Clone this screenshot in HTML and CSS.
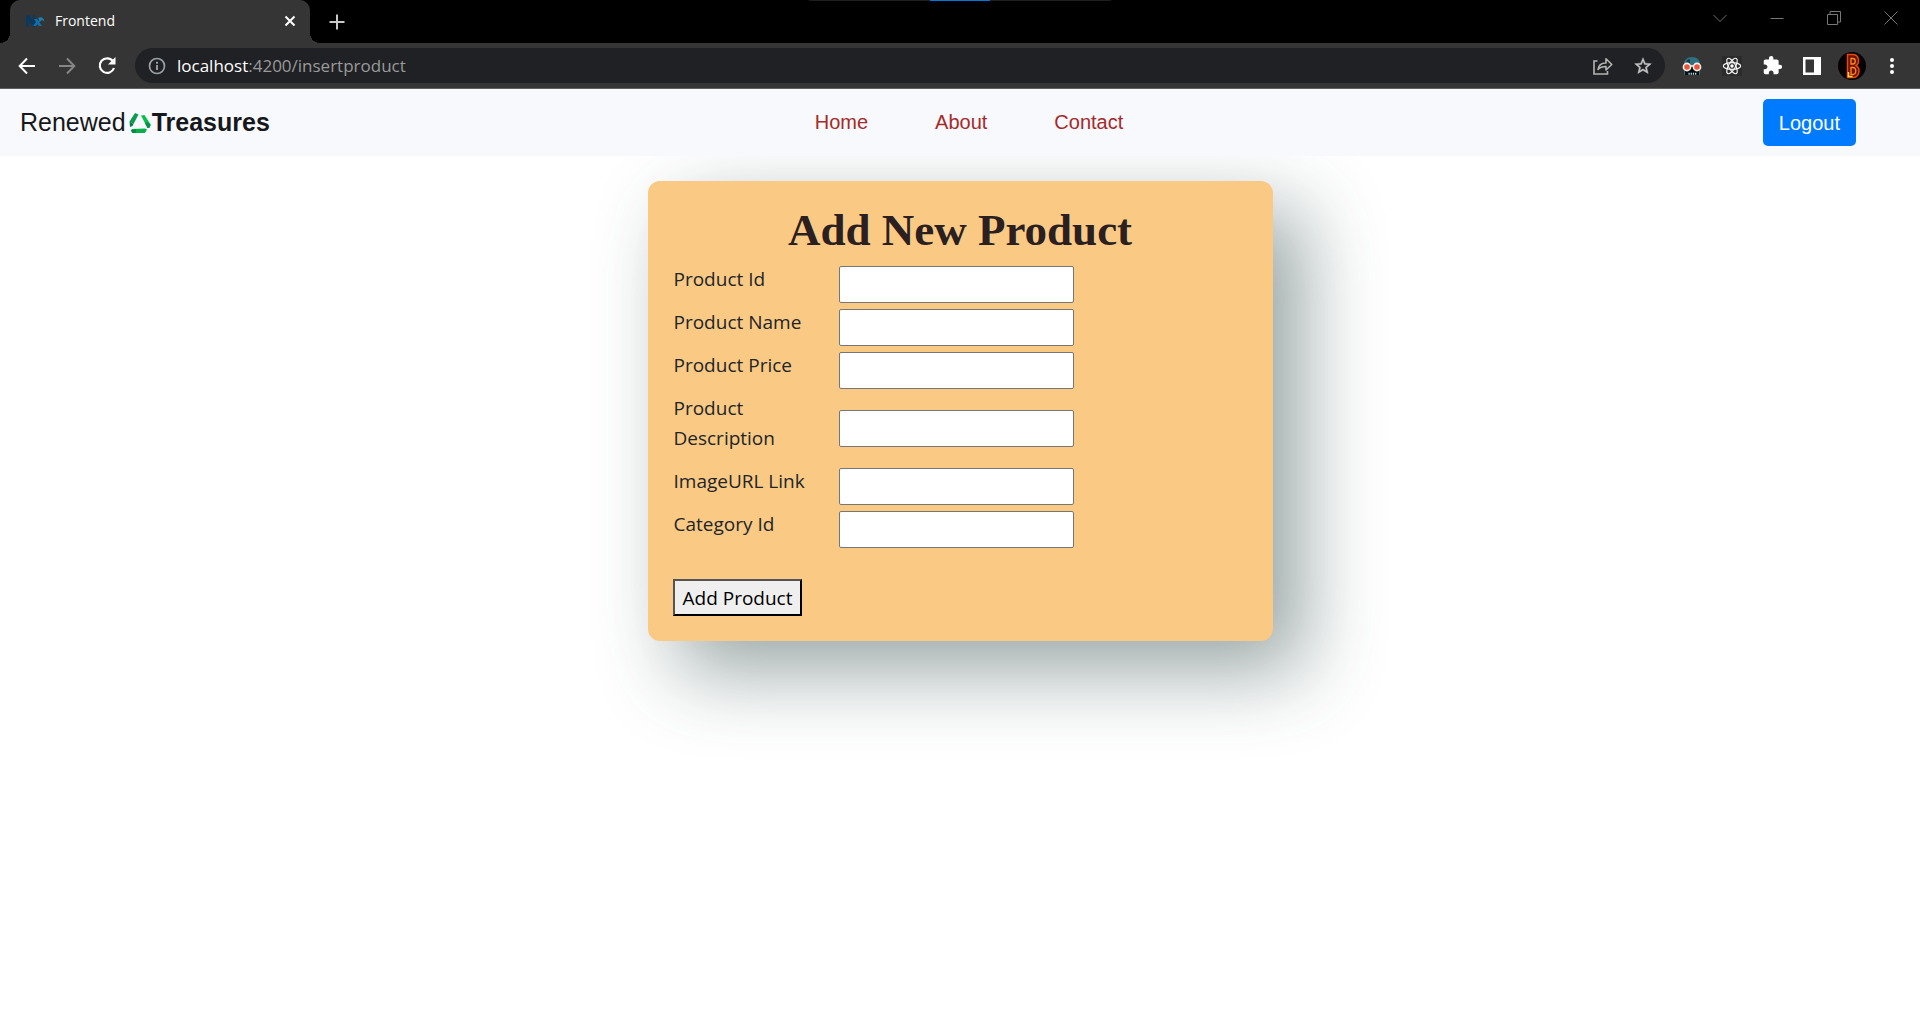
FILE: index.html
```
<!DOCTYPE html>
<html lang="en">
<head>
<meta charset="utf-8">
<title>Frontend</title>
<link rel="stylesheet" href="styles.css">
</head>
<body>
<header class="browser">
  <div class="capture-bar"><span class="capture-grip"></span></div>
  <div class="tab-strip">
    <div class="tab">
      <svg class="favicon" width="20" height="16" viewBox="0 0 20 16" fill="none">
        <path d="M1 14V2h3l4 6V2h2v12H8L3.500 7v7z" fill="#073a63"/>
        <path d="M8 13l3-4-2-3h3l1.500 2L15 6h2l-2.500 3.500L17 13h-3l-1.500-2-1.500 2z" fill="#0d70a8"/>
        <path d="M13 5c3-2 6 0 6.500 4-1-2-3-2-4.500-1z" fill="#1a80b8"/>
      </svg>
      <span class="tab-title">Frontend</span>
      <button class="tab-close" aria-label="Close tab">
        <svg width="12" height="12" viewBox="0 0 12 12" stroke="#fff" stroke-width="2"><path d="M1.500 1.500l9 9M10.500 1.500l-9 9"/></svg>
      </button>
    </div>
    <button class="new-tab" aria-label="New tab">
      <svg width="16" height="16" viewBox="0 0 16 16" stroke="#c8c8c8" stroke-width="2"><path d="M8 .500v15M.500 8h15"/></svg>
    </button>
    <div class="window-controls">
      <button aria-label="Search tabs"><svg width="14" height="14" viewBox="0 0 14 14" fill="none" stroke="#6b6b6b"><path d="M.500 4l6.500 6.500L13.500 4"/></svg></button>
      <button aria-label="Minimize"><svg width="14" height="14" viewBox="0 0 14 14" fill="none" stroke="#777"><path d="M.500 7.500h13"/></svg></button>
      <button aria-label="Restore"><svg width="14" height="14" viewBox="0 0 14 14" fill="none" stroke="#777"><path d="M.500 3.500h10v10H.500zM3 3.500V.500h10.500v10.500H10.500"/></svg></button>
      <button aria-label="Close"><svg width="14" height="14" viewBox="0 0 14 14" fill="none" stroke="#777"><path d="M.500 .500l13 13M13.500 .500l-13 13"/></svg></button>
    </div>
  </div>
  <div class="toolbar">
    <button class="tool" aria-label="Back"><svg width="18" height="18" viewBox="0 0 18 18" fill="none" stroke="#fff" stroke-width="2"><path d="M17 9H2M9 1.500L1.700 9 9 16.500"/></svg></button>
    <button class="tool" aria-label="Forward"><svg width="18" height="18" viewBox="0 0 18 18" fill="none" stroke="#868686" stroke-width="2"><path d="M1 9h15M9 1.500L16.300 9 9 16.500"/></svg></button>
    <button class="tool" aria-label="Reload"><svg width="18" height="18" viewBox="0 0 18 18" fill="none"><path d="M14.800 4A7.300 7.300 0 1 0 16 11" stroke="#fff" stroke-width="2.200"/><path d="M17.500 0v7.500H10z" fill="#fff"/></svg></button>
    <div class="address">
      <svg width="18" height="18" viewBox="0 0 18 18" fill="none" stroke="#9aa0a6"><circle cx="9" cy="9" r="7.500" stroke-width="1.700"/><path d="M9 8v5M9 4.800v2" stroke-width="1.900"/></svg>
      <span class="url"><span class="host">localhost</span>:4200/insertproduct</span>
      <button class="tool" aria-label="Share"><svg width="20" height="18" viewBox="0 0 20 18" fill="none" stroke="#b4b4b4" stroke-width="1.600"><path d="M4.500 4H1v13h13.500v-3"/><path d="M5 12.500c.500-4 3-6.500 8-6.500V1.800l5.800 5.700L13 13V9.500c-3.500 0-6 .700-8 3z" stroke-linejoin="round"/></svg></button>
      <button class="tool" aria-label="Bookmark"><svg width="20" height="20" viewBox="0 0 24 24" fill="#c4c4c4"><path d="M22 9.240l-7.190-.620L12 2 9.190 8.630 2 9.240l5.460 4.730L5.820 21 12 17.270 18.180 21l-1.630-7.030zM12 15.400l-3.760 2.270 1-4.280-3.320-2.880 4.380-.380L12 6.100l1.710 4.040 4.380.380-3.320 2.880 1 4.280z" stroke="#c4c4c4" stroke-width=".500"/></svg></button>
    </div>
    <button class="tool" aria-label="Goggles extension"><svg width="20" height="20" viewBox="0 0 20 20"><path d="M2 10C1.500 4 5 1 10 1s8.500 3 8 9v9H2z" fill="#2f6f80"/><path d="M4.500 9V5.500C5.500 3 7.500 2.500 8 4v5z" fill="#173742"/><path d="M3 14l14-.500V19H3z" fill="#080d10"/><path d="M8 10h4l1 6H7z" fill="#080d10"/><circle cx="5" cy="11" r="3.600" fill="#e9573a" stroke="#f4eee8" stroke-width="1.600"/><circle cx="15" cy="11" r="3.600" fill="#e9573a" stroke="#f4eee8" stroke-width="1.600"/><path d="M8.500 10h3" stroke="#f4eee8" stroke-width="1.600"/><path d="M6.500 17.700h8" stroke="#bde3ec" stroke-width="2" stroke-dasharray="1.200 1"/></svg></button>
    <button class="tool" aria-label="React extension"><svg class="react" width="20" height="20" viewBox="0 0 20 20" fill="none" stroke="#f2f2f2" stroke-width="1.200"><ellipse cx="10" cy="10" rx="8.700" ry="3.400"/><ellipse cx="10" cy="10" rx="8.700" ry="3.400" transform="rotate(60 10 10)"/><ellipse cx="10" cy="10" rx="8.700" ry="3.400" transform="rotate(120 10 10)"/><circle cx="10" cy="10" r="1.700" fill="#fff" stroke="none"/></svg></button>
    <button class="tool" aria-label="Extensions"><svg width="21" height="21" viewBox="0 0 24 24" fill="#fff"><path d="M20.500 11H19V7c0-1.100-.900-2-2-2h-4V3.500a2.500 2.500 0 0 0-5 0V5H4c-1.100 0-1.990.900-1.990 2v3.800H3.500c1.490 0 2.700 1.210 2.700 2.700s-1.210 2.700-2.700 2.700H2V20c0 1.100.900 2 2 2h3.800v-1.500c0-1.490 1.210-2.700 2.700-2.700s2.700 1.210 2.700 2.700V22H17c1.100 0 2-.900 2-2v-4h1.500a2.500 2.500 0 0 0 0-5z"/></svg></button>
    <button class="tool" aria-label="Side panel"><svg width="18" height="18" viewBox="0 0 18 18"><path d="M0 0h18v18H0zM2.500 2.500v13H11v-13z" fill="#fff" fill-rule="evenodd"/></svg></button>
    <button class="tool" aria-label="Profile"><svg width="28" height="28" viewBox="0 0 28 28" fill="none"><circle cx="14" cy="14" r="14" fill="#070202"/><path d="M9.500 2.500h5c7 0 7.500 8.500 3.500 11 5 3 3.500 12-3 12H9.500z" fill="#6d1204" stroke="#e8480f" stroke-width="1.500"/><path d="M13 6.500h2c3 0 3 5.500 0 5.500h-2zM13 15.500h2c4 0 3.500 7 0 7h-2z" stroke="#ff8a1f" stroke-width="1.300"/><path d="M10.500 20v4.500h4" stroke="#ffd04a" stroke-width="1.500"/></svg></button>
    <button class="tool" aria-label="Menu"><svg width="4" height="18" viewBox="0 0 4 18" fill="#fff"><circle cx="2" cy="3" r="2"/><circle cx="2" cy="9" r="2"/><circle cx="2" cy="15" r="2"/></svg></button>
  </div>
</header>

<nav class="navbar">
  <a class="brand" href="#">Renewed<svg width="24" height="22" viewBox="0 0 24 22"><path d="M7 1l3.500 1.500L5.500 12 1.500 9.500z" fill="#0a9a50"/><path d="M1.500 9.500l4 2.500-1 2L2 15z" fill="#067f45"/><path d="M13 3.500l3.500-.500L23 13l-3.500 3z" fill="#0abf4e"/><path d="M19.500 10L22.500 13l-1 3h-2L17 11z" fill="#079248"/><path d="M4 17l13-.500 2 1-2 3.500H4.500l-1.500-2z" fill="#08b04b"/><path d="M3 18l5-1v4H4.500z" fill="#078c46"/></svg><strong>Treasures</strong></a>
  <ul class="links">
    <li><a href="#">Home</a></li>
    <li><a href="#">About</a></li>
    <li><a href="#">Contact</a></li>
  </ul>
  <button class="logout">Logout</button>
</nav>

<main class="page">
  <form class="card">
    <h1>Add New Product</h1>
    <div class="fields">
      <label for="product-id">Product Id</label><input id="product-id" type="text">
      <label for="product-name">Product Name</label><input id="product-name" type="text">
      <label for="product-price">Product Price</label><input id="product-price" type="text">
      <label for="product-description">Product Description</label><input id="product-description" type="text">
      <label for="image-url">ImageURL Link</label><input id="image-url" type="text">
      <label for="category-id">Category Id</label><input id="category-id" type="text">
    </div>
    <button class="submit" type="button">Add Product</button>
  </form>
</main>
</body>
</html>
```
FILE: styles.css
```
* { box-sizing: border-box; }
body {
  min-height: 100vh;
  margin: 0;
  background: #fff;
  color: #212529;
  font-family: "Open Sans", "Noto Sans", sans-serif;
  font-size: 19px;
  line-height: 30px;
}
button { font: inherit; cursor: pointer; }
svg { display: block; flex: none; }

/* Browser window */
.browser {
  position: relative;
  background: #353535;
  border-bottom: 1px solid #606060;
}
.browser button {
  display: flex;
  align-items: center;
  justify-content: center;
  padding: 0;
  border: 0;
  background: none;
}
.capture-bar {
  position: absolute;
  top: 0;
  left: 50%;
  width: 302px;
  height: 1px;
  margin-left: -151px;
  background: #1e1e1e;
}
.capture-grip {
  display: block;
  width: 60px;
  height: 1px;
  margin: 0 auto;
  background: #0078d7;
}
.tab-strip {
  display: flex;
  height: 43px;
  padding: 0 1px 0 10px;
  background: #000;
}
.tab {
  position: relative;
  display: flex;
  align-items: center;
  width: 300px;
  padding: 0 14px 2px 15px;
  border-radius: 10px 10px 0 0;
  background: #353535;
  color: #fff;
  font-size: 14px;
}
.tab::before,
.tab::after {
  content: "";
  position: absolute;
  bottom: 0;
  width: 10px;
  height: 10px;
}
.tab::before { left: -10px; background: radial-gradient(circle at 0 0, #000 10px, #353535 10px); }
.tab::after { right: -10px; background: radial-gradient(circle at 100% 0, #000 10px, #353535 10px); }
.tab-title { flex: 1; padding-left: 10px; }
.new-tab { width: 54px; }
.window-controls {
  display: flex;
  height: 36px;
  margin-left: auto;
}
.window-controls button { width: 57px; }
.toolbar {
  display: flex;
  align-items: center;
  height: 45px;
  padding: 0 8px 0 7px;
}
.tool { width: 40px; height: 34px; }
.address {
  display: flex;
  flex: 1;
  align-items: center;
  height: 35px;
  margin: 0 7px 0 8px;
  padding: 0 2px 0 13px;
  border-radius: 18px;
  background: #202124;
  color: #9a9a9a;
}
.url {
  flex: 1;
  padding-left: 11px;
  font-size: 17px;
}
.host { color: #fff; }
.react { background: #2b2b2b; }

/* Site navigation */
.navbar {
  position: relative;
  z-index: 1;
  display: grid;
  grid-template-columns: 1fr auto 1fr;
  align-items: center;
  padding: 10px 64px 10px 20px;
  background: #f8f9fc;
  font-family: "Liberation Sans", Arial, sans-serif;
  font-size: 20px;
}
.brand {
  display: flex;
  align-items: center;
  padding-bottom: 2px;
  color: #16181b;
  font-size: 25px;
  text-decoration: none;
}
.brand svg { margin: 2px 0 0 2px; }
.links {
  display: flex;
  gap: 67px;
  margin: 0;
  padding: 0 0 2px 62px;
  list-style: none;
}
.links a { color: #a52a2a; text-decoration: none; }
.logout {
  justify-self: end;
  height: 47px;
  padding: 0 16px;
  border: 0;
  border-radius: 5px;
  background: #007bff;
  color: #fff;
}

/* Product form */
.page {
  display: flex;
  justify-content: center;
  padding: 25px 20px;
}
.card {
  width: 100%;
  max-width: 625px;
  padding: 25px;
  border-radius: 12px;
  background: #faca84;
  box-shadow: 30px 30px 80px rgba(42, 66, 66, .48);
}
h1 {
  margin: 0 0 10px;
  color: #2a2021;
  font-family: "Liberation Serif", "Times New Roman", serif;
  font-size: 45px;
  font-weight: 700;
  line-height: 48px;
  text-align: center;
}
.fields {
  display: grid;
  grid-template-columns: 140px 235px;
  column-gap: 25px;
  row-gap: 3px;
  align-items: center;
  padding-left: 1px;
}
.fields label { padding-bottom: 10px; }
.fields input {
  width: 100%;
  height: 37px;
  padding: 1px 2px;
  border: 1px solid #767676;
  border-radius: 2px;
  background: #fff;
  font: inherit;
}
.submit {
  height: 37px;
  margin-top: 30px;
  padding: 0 8px;
  border: 2px outset #000;
  background: #efefef;
  color: #000;
}
```
